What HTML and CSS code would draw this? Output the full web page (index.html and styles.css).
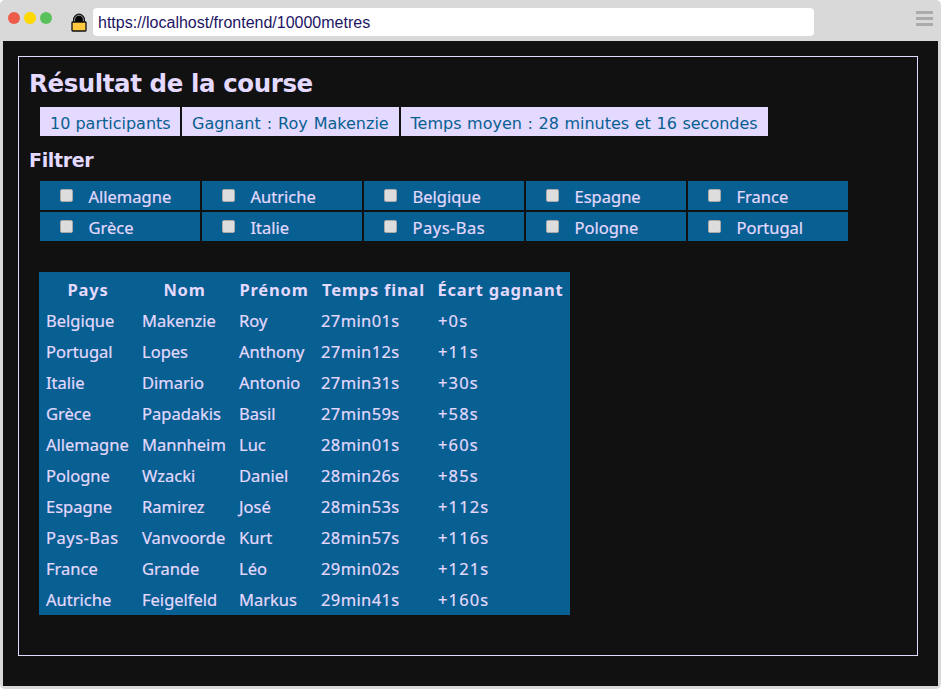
FILE: index.html
```html
<!DOCTYPE html>
<html lang="fr">
<head>
<meta charset="utf-8">
<title>Résultat de la course</title>
<link rel="stylesheet" href="styles.css">
</head>
<body>
<div class="window">
  <header class="toolbar">
    <div class="dots"><span class="dot red"></span><span class="dot yellow"></span><span class="dot green"></span></div>
    <svg class="lock" width="16" height="19" viewBox="0 0 16 19">
      <path d="M2 9.5V6.8a6 6.2 0 0 1 12 0V9.5" fill="#111"/>
      <path d="M3.6 9V6.8a4.4 4.6 0 0 1 8.8 0V9" fill="#000" stroke="#bbb" stroke-width=".8"/>
      <rect x="1" y="9" width="14" height="9" rx=".8" fill="#ffc83d" stroke="#111" stroke-width="1.3"/>
    </svg>
    <div class="address"><span>https://localhost/frontend/10000metres</span></div>
    <div class="menu"><i></i><i></i><i></i></div>
  </header>
  <main class="viewport">
    <section class="panel">
      <h1>Résultat de la course</h1>
      <ul class="summary">
        <li class="count">10 participants</li>
        <li class="winner">Gagnant : Roy Makenzie</li>
        <li class="average">Temps moyen : 28 minutes et 16 secondes</li>
      </ul>
      <h2>Filtrer</h2>
      <div class="filters">
        <label><input type="checkbox">Allemagne</label>
        <label><input type="checkbox">Autriche</label>
        <label><input type="checkbox">Belgique</label>
        <label><input type="checkbox">Espagne</label>
        <label><input type="checkbox">France</label>
        <label><input type="checkbox">Grèce</label>
        <label><input type="checkbox">Italie</label>
        <label class="hyphenated"><input type="checkbox">Pays-Bas</label>
        <label><input type="checkbox">Pologne</label>
        <label><input type="checkbox">Portugal</label>
      </div>
      <table class="results">
        <colgroup><col class="c-country"><col class="c-name"><col class="c-first"><col class="c-time"><col class="c-gap"></colgroup>
        <thead><tr><th>Pays</th><th>Nom</th><th>Prénom</th><th>Temps final</th><th>Écart gagnant</th></tr></thead>
        <tbody>
          <tr><td>Belgique</td><td>Makenzie</td><td>Roy</td><td>27min01s</td><td>+0s</td></tr>
          <tr><td>Portugal</td><td>Lopes</td><td>Anthony</td><td>27min12s</td><td>+11s</td></tr>
          <tr><td>Italie</td><td>Dimario</td><td>Antonio</td><td>27min31s</td><td>+30s</td></tr>
          <tr><td>Grèce</td><td>Papadakis</td><td>Basil</td><td>27min59s</td><td>+58s</td></tr>
          <tr><td>Allemagne</td><td>Mannheim</td><td>Luc</td><td>28min01s</td><td>+60s</td></tr>
          <tr><td>Pologne</td><td>Wzacki</td><td>Daniel</td><td>28min26s</td><td>+85s</td></tr>
          <tr><td>Espagne</td><td>Ramirez</td><td>José</td><td>28min53s</td><td>+112s</td></tr>
          <tr><td class="hyphenated">Pays-Bas</td><td>Vanvoorde</td><td>Kurt</td><td>28min57s</td><td>+116s</td></tr>
          <tr><td>France</td><td>Grande</td><td>Léo</td><td>29min02s</td><td>+121s</td></tr>
          <tr><td>Autriche</td><td>Feigelfeld</td><td>Markus</td><td>29min41s</td><td>+160s</td></tr>
        </tbody>
      </table>
    </section>
  </main>
</div>
</body>
</html>
```
FILE: styles.css
```css
* { box-sizing: border-box; }
body { margin: 0; background: #fff; overflow: hidden; }
.window {
  width: 941px; height: 689px; padding: 0 3px 3px;
  background: #d9d9d9; border-radius: 5px;
  display: flex; flex-direction: column;
}
.toolbar { height: 41px; display: flex; align-items: flex-start; flex: none; }
.dots { display: flex; gap: 4px; padding: 12px 0 0 5px; }
.dot { width: 12px; height: 12px; border-radius: 50%; }
.red { background: #ee5b4b; }
.yellow { background: #ffd800; }
.green { background: #5ac05a; }
.lock { margin: 13px 0 0 19px; flex: none; }
.address {
  width: 721px; height: 28px; margin: 8px 0 0 6px; padding-left: 5px;
  background: #fff; border-radius: 4px; color: #1c1464;
  font: 16px/29px "Liberation Sans", sans-serif;
}
.menu { display: flex; flex-direction: column; gap: 3px; margin: 11px 5px 0 auto; }
.menu i { width: 17px; height: 3px; background: #ababab; }
.viewport { flex: 1; width: 935px; background: #111; padding: 15px; }
.panel {
  width: 900px; height: 600px; border: 1px solid #e4d9ff; padding: 11px 10px 0;
  color: #e4d9ff; font: 16px "DejaVu Sans", sans-serif;
}
h1 { margin: 0; font: bold 24.5px/31px "DejaVu Sans", sans-serif; letter-spacing: -.42px; }
.summary { display: flex; gap: 2px; list-style: none; margin: 8px 0 0 11px; padding: 0; }
.summary li {
  height: 29px; padding-left: 10px; background: #e4d9ff; color: #085f91;
  line-height: 34px; white-space: nowrap;
}
.summary .count { width: 140px; }
.summary .winner { width: 216.5px; word-spacing: .9px; }
.summary .average { width: 367px; word-spacing: .5px; }
h2 { margin: 12px 0 0; font: bold 19px/24px "DejaVu Sans", sans-serif; letter-spacing: -.35px; }
.filters {
  display: grid; grid-template-columns: repeat(5, 160px); gap: 2px;
  margin: 9px 0 0 11px; font: 16.5px/32px "Noto Sans", sans-serif;
  -webkit-text-stroke: .2px #e4d9ff;
}
.filters label { display: flex; height: 29px; padding-left: 20px; background: #085f91; }
.filters input {
  appearance: none; width: 13px; height: 13px; margin: 8px 15.5px 0 0;
  background: #ddd; border: 1px solid #aaa; border-radius: 2px;
}
.filters .hyphenated, .results .hyphenated { letter-spacing: .5px; }
.results {
  table-layout: fixed; width: 531px; margin: 31px 0 0 10px;
  border-spacing: 2px; border-collapse: separate; background: #085f91;
  font: 16.5px/27px "Noto Sans", sans-serif;
  -webkit-text-stroke: .2px #e4d9ff;
}
.results th, .results td { height: 29px; padding: 2px 0 0 5px; text-align: left; white-space: nowrap; }
.results th { font-weight: bold; text-align: center; padding: 2px 0 0; letter-spacing: .8px; -webkit-text-stroke: 0; }
.results td:nth-child(4) { letter-spacing: .38px; }
.results td:nth-child(5) { letter-spacing: 1.15px; }
.c-country { width: 94px; }
.c-name { width: 95px; }
.c-first { width: 80px; }
.c-time { width: 115px; }
.c-gap { width: 135px; }
```
